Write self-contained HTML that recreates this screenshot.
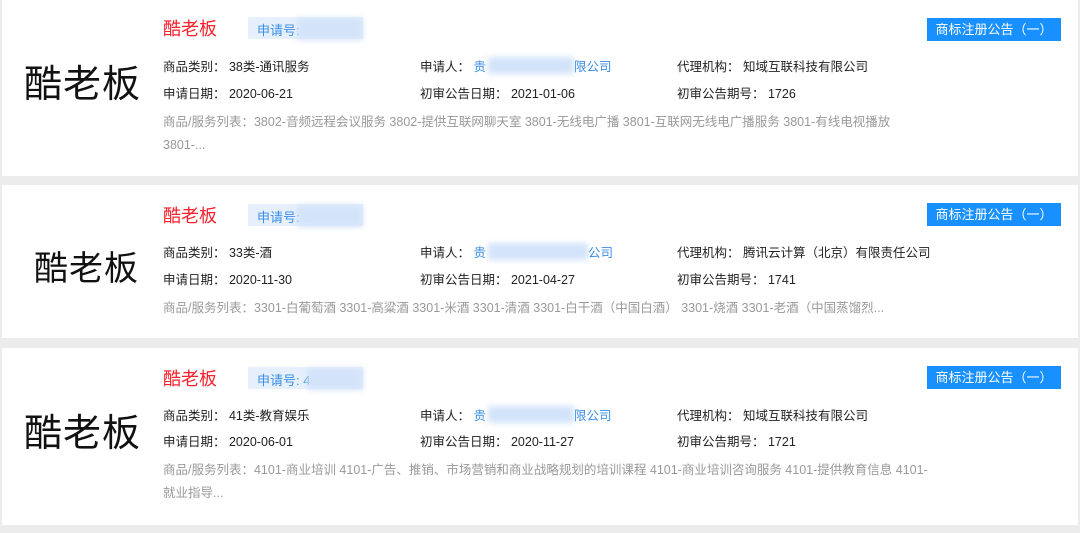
<!DOCTYPE html>
<html><head><meta charset="utf-8"><style>
*{margin:0;padding:0;box-sizing:border-box}
body{width:1080px;height:533px;background:#ececec;font-family:"Liberation Sans","Noto Sans CJK SC",sans-serif;position:relative;overflow:hidden}
.card{position:absolute;left:2px;width:1076px;background:#fff}
.t{position:absolute;white-space:nowrap}
.logo{left:22px;font-size:38px;color:#111;letter-spacing:1px}
.title{left:161px;font-size:18px;color:#f5222d}
.tag{left:246px;width:115px;height:22px;background:#e6f0fc;font-size:13px;color:#3a8ee6;padding:3px 0 0 9px}
.blur{position:absolute;background:#d3e3fa;filter:blur(3px)}
.btn{left:925px;width:134px;height:23px;background:#1890ff;color:#fff;font-size:13px;text-align:center;line-height:23px}
.r{font-size:12.5px;color:#222}
.a{color:#3a8ee6}
.g{font-size:12.5px;color:#999;left:161px;line-height:23px}
</style></head><body>

<div class="card" style="top:0;height:176px">
<div class="t logo" style="top:53px">酷老板</div>
<div class="t title" style="top:15px">酷老板</div>
<div class="t tag" style="top:17px">申请号: 4</div><div class="blur" style="left:295px;top:18px;width:66px;height:22px"></div>
<div class="t btn" style="top:18px">商标注册公告（一）</div>
<div class="t r" style="left:161px;top:56px">商品类别： 38类-通讯服务</div>
<div class="t r" style="left:418px;top:56px">申请人： <span class="a">贵</span></div><div class="blur" style="left:486px;top:57px;width:86px;height:17px"></div><div class="t r a" style="left:572px;top:56px">限公司</div>
<div class="t r" style="left:675px;top:56px">代理机构： 知域互联科技有限公司</div>
<div class="t r" style="left:161px;top:83px">申请日期： 2020-06-21</div>
<div class="t r" style="left:418px;top:83px">初审公告日期： 2021-01-06</div>
<div class="t r" style="left:675px;top:83px">初审公告期号： 1726</div>
<div class="t g" style="top:111px">商品/服务列表：3802-音频远程会议服务 3802-提供互联网聊天室 3801-无线电广播 3801-互联网无线电广播服务 3801-有线电视播放<br>3801-...</div>
</div>

<div class="card" style="top:185px;height:153px">
<div class="t logo" style="top:56px;left:32px;font-size:34px">酷老板</div>
<div class="t title" style="top:17px">酷老板</div>
<div class="t tag" style="top:19px">申请号: 5</div><div class="blur" style="left:295px;top:20px;width:66px;height:22px"></div>
<div class="t btn" style="top:18px">商标注册公告（一）</div>
<div class="t r" style="left:161px;top:57px">商品类别： 33类-酒</div>
<div class="t r" style="left:418px;top:57px">申请人： <span class="a">贵</span></div><div class="blur" style="left:486px;top:58px;width:100px;height:17px"></div><div class="t r a" style="left:586px;top:57px">公司</div>
<div class="t r" style="left:675px;top:57px">代理机构： 腾讯云计算（北京）有限责任公司</div>
<div class="t r" style="left:161px;top:84px">申请日期： 2020-11-30</div>
<div class="t r" style="left:418px;top:84px">初审公告日期： 2021-04-27</div>
<div class="t r" style="left:675px;top:84px">初审公告期号： 1741</div>
<div class="t g" style="top:112px">商品/服务列表：3301-白葡萄酒 3301-高粱酒 3301-米酒 3301-清酒 3301-白干酒（中国白酒） 3301-烧酒 3301-老酒（中国蒸馏烈...</div>
</div>

<div class="card" style="top:348px;height:177px">
<div class="t logo" style="top:54px">酷老板</div>
<div class="t title" style="top:17px">酷老板</div>
<div class="t tag" style="top:19px">申请号: 46</div><div class="blur" style="left:305px;top:20px;width:56px;height:22px"></div>
<div class="t btn" style="top:18px">商标注册公告（一）</div>
<div class="t r" style="left:161px;top:57px">商品类别： 41类-教育娱乐</div>
<div class="t r" style="left:418px;top:57px">申请人： <span class="a">贵</span></div><div class="blur" style="left:486px;top:58px;width:86px;height:17px"></div><div class="t r a" style="left:572px;top:57px">限公司</div>
<div class="t r" style="left:675px;top:57px">代理机构： 知域互联科技有限公司</div>
<div class="t r" style="left:161px;top:83px">申请日期： 2020-06-01</div>
<div class="t r" style="left:418px;top:83px">初审公告日期： 2020-11-27</div>
<div class="t r" style="left:675px;top:83px">初审公告期号： 1721</div>
<div class="t g" style="top:111px">商品/服务列表：4101-商业培训 4101-广告、推销、市场营销和商业战略规划的培训课程 4101-商业培训咨询服务 4101-提供教育信息 4101-<br>就业指导...</div>
</div>

</body></html>
